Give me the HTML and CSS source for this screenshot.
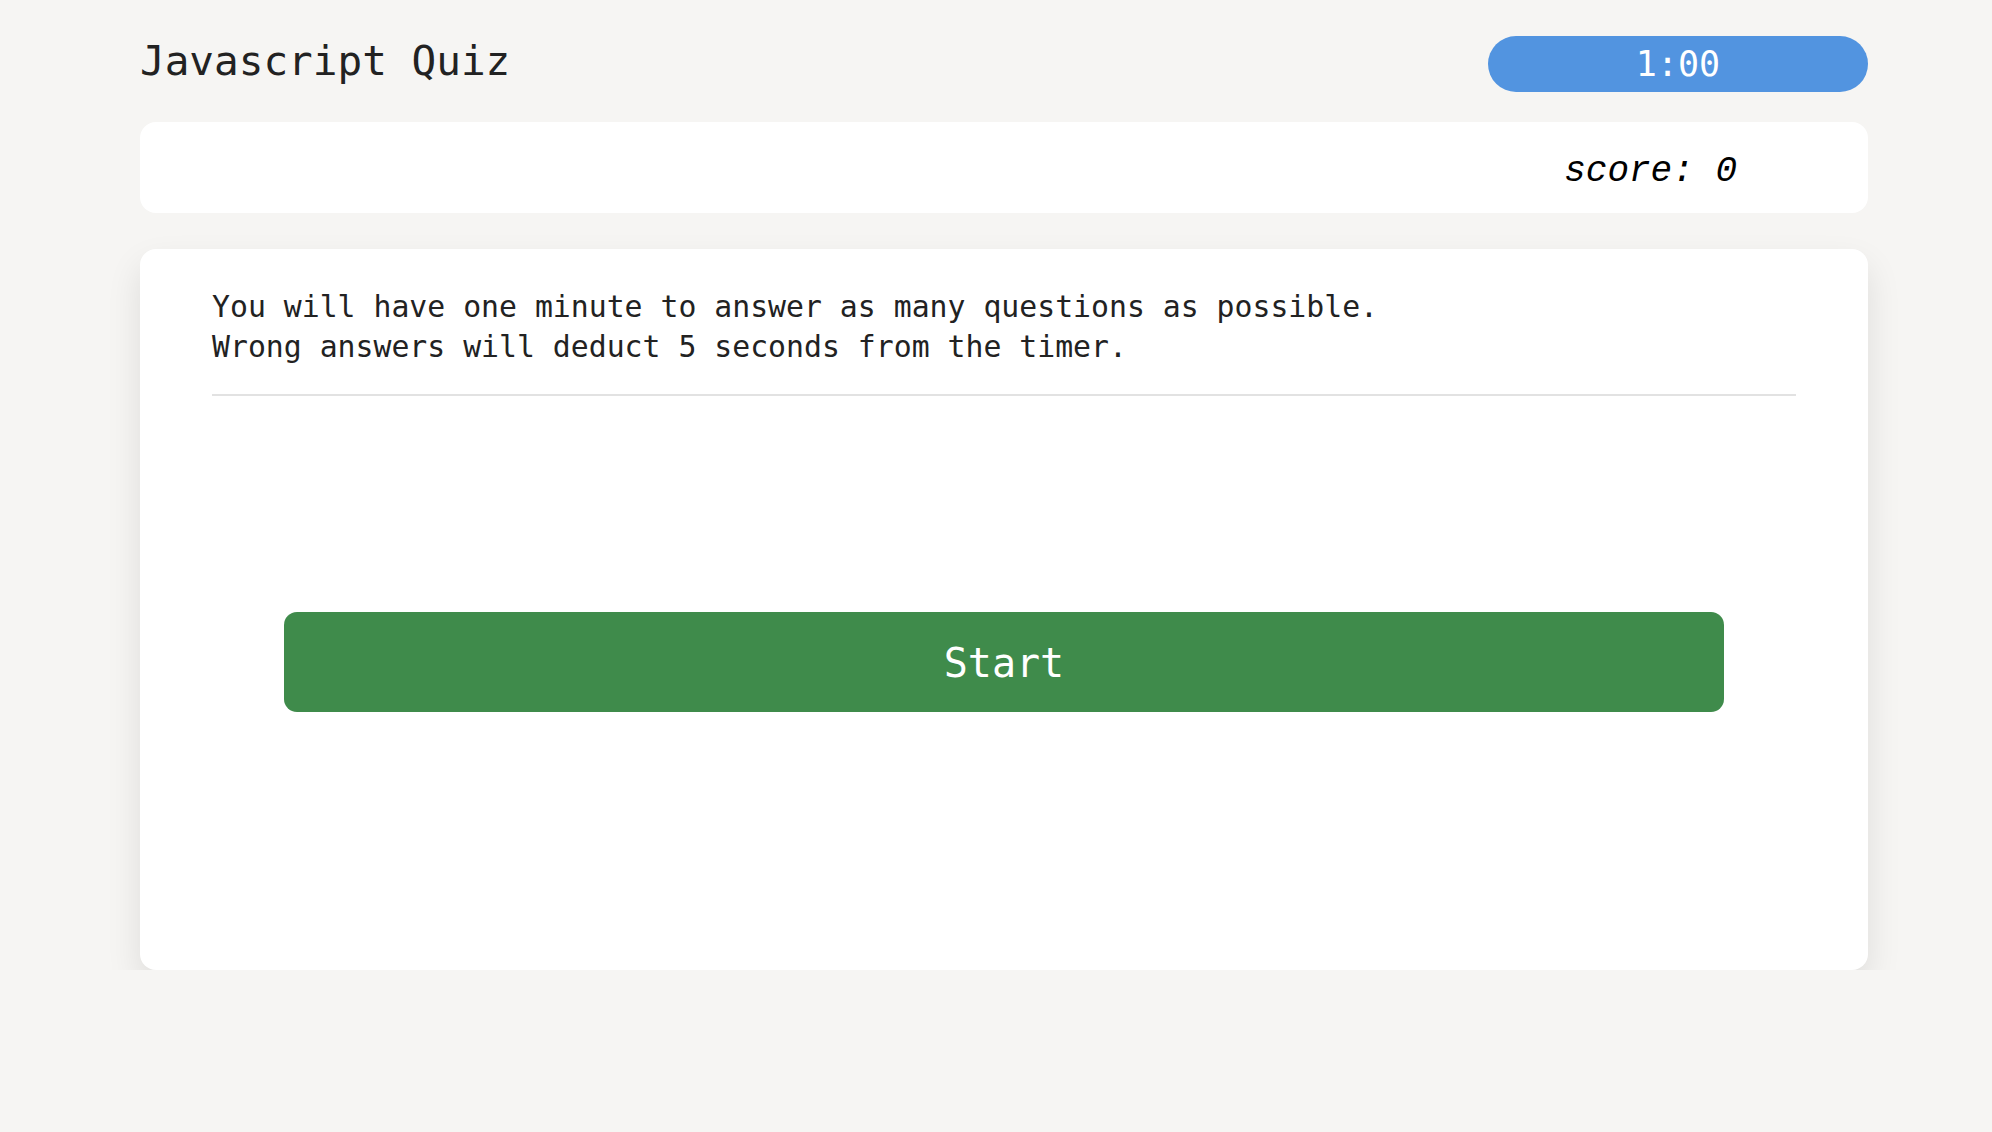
FILE: index.html
```html
<!DOCTYPE html>
<html lang="en">
<head>
<meta charset="utf-8">
<title>Javascript Quiz</title>
<link rel="stylesheet" href="styles.css">
</head>
<body>
<div class="page">
  <header class="header">
    <h1 class="title">Javascript Quiz</h1>
    <div class="timer">1:00</div>
  </header>
  <div class="score-card">
    <span class="score">score: 0</span>
  </div>
  <main class="quiz-card">
    <p class="intro">You will have one minute to answer as many questions as possible.<br>Wrong answers will deduct 5 seconds from the timer.</p>
    <hr class="divider">
    <button class="start-btn">Start</button>
  </main>
</div>
</body>
</html>
```
FILE: styles.css
```css
* { box-sizing: border-box; }
html, body {
  margin: 0;
  padding: 0;
  background: #f6f5f3;
  font-family: "DejaVu Sans Mono", "Liberation Mono", monospace;
  color: #222;
}
.page {
  width: 1728px;
  margin-left: 140px;
  padding-top: 36px;
}
.header {
  display: flex;
  justify-content: space-between;
  align-items: center;
  height: 56px;
}
.title {
  margin: 0;
  font-size: 41px;
  font-weight: normal;
  line-height: 56px;
  color: #222;
  position: relative;
  top: -3px;
}
.timer {
  width: 380px;
  height: 56px;
  border-radius: 28px;
  background: #5294e0;
  color: #fff;
  font-size: 35px;
  line-height: 56px;
  text-align: center;
}
.score-card {
  margin-top: 30px;
  height: 91px;
  background: #fff;
  border-radius: 16px;
  display: flex;
  justify-content: flex-end;
  align-items: center;
  padding-right: 131px;
}
.score {
  font-family: "Liberation Mono", monospace;
  font-style: italic;
  font-size: 36px;
  color: #000;
  position: relative;
  top: 4px;
}
.quiz-card {
  margin-top: 36px;
  height: 721px;
  background: #fff;
  border-radius: 16px;
  box-shadow: 0 16px 34px rgba(0, 0, 0, 0.1);
  padding: 38px 72px 0 72px;
  display: flex;
  flex-direction: column;
}
.intro {
  margin: 0;
  font-size: 29.8px;
  line-height: 40px;
  color: #222;
}
.divider {
  margin: 27px 0 0 0;
  border: 0;
  height: 2px;
  background: #e2e2e2;
}
.start-btn {
  margin: 216px 72px 0 72px;
  height: 100px;
  border: 0;
  border-radius: 13px;
  background: #3f8b4b;
  color: #fff;
  font-family: "DejaVu Sans Mono", monospace;
  font-size: 40px;
  padding-top: 2px;
  cursor: pointer;
}
```
